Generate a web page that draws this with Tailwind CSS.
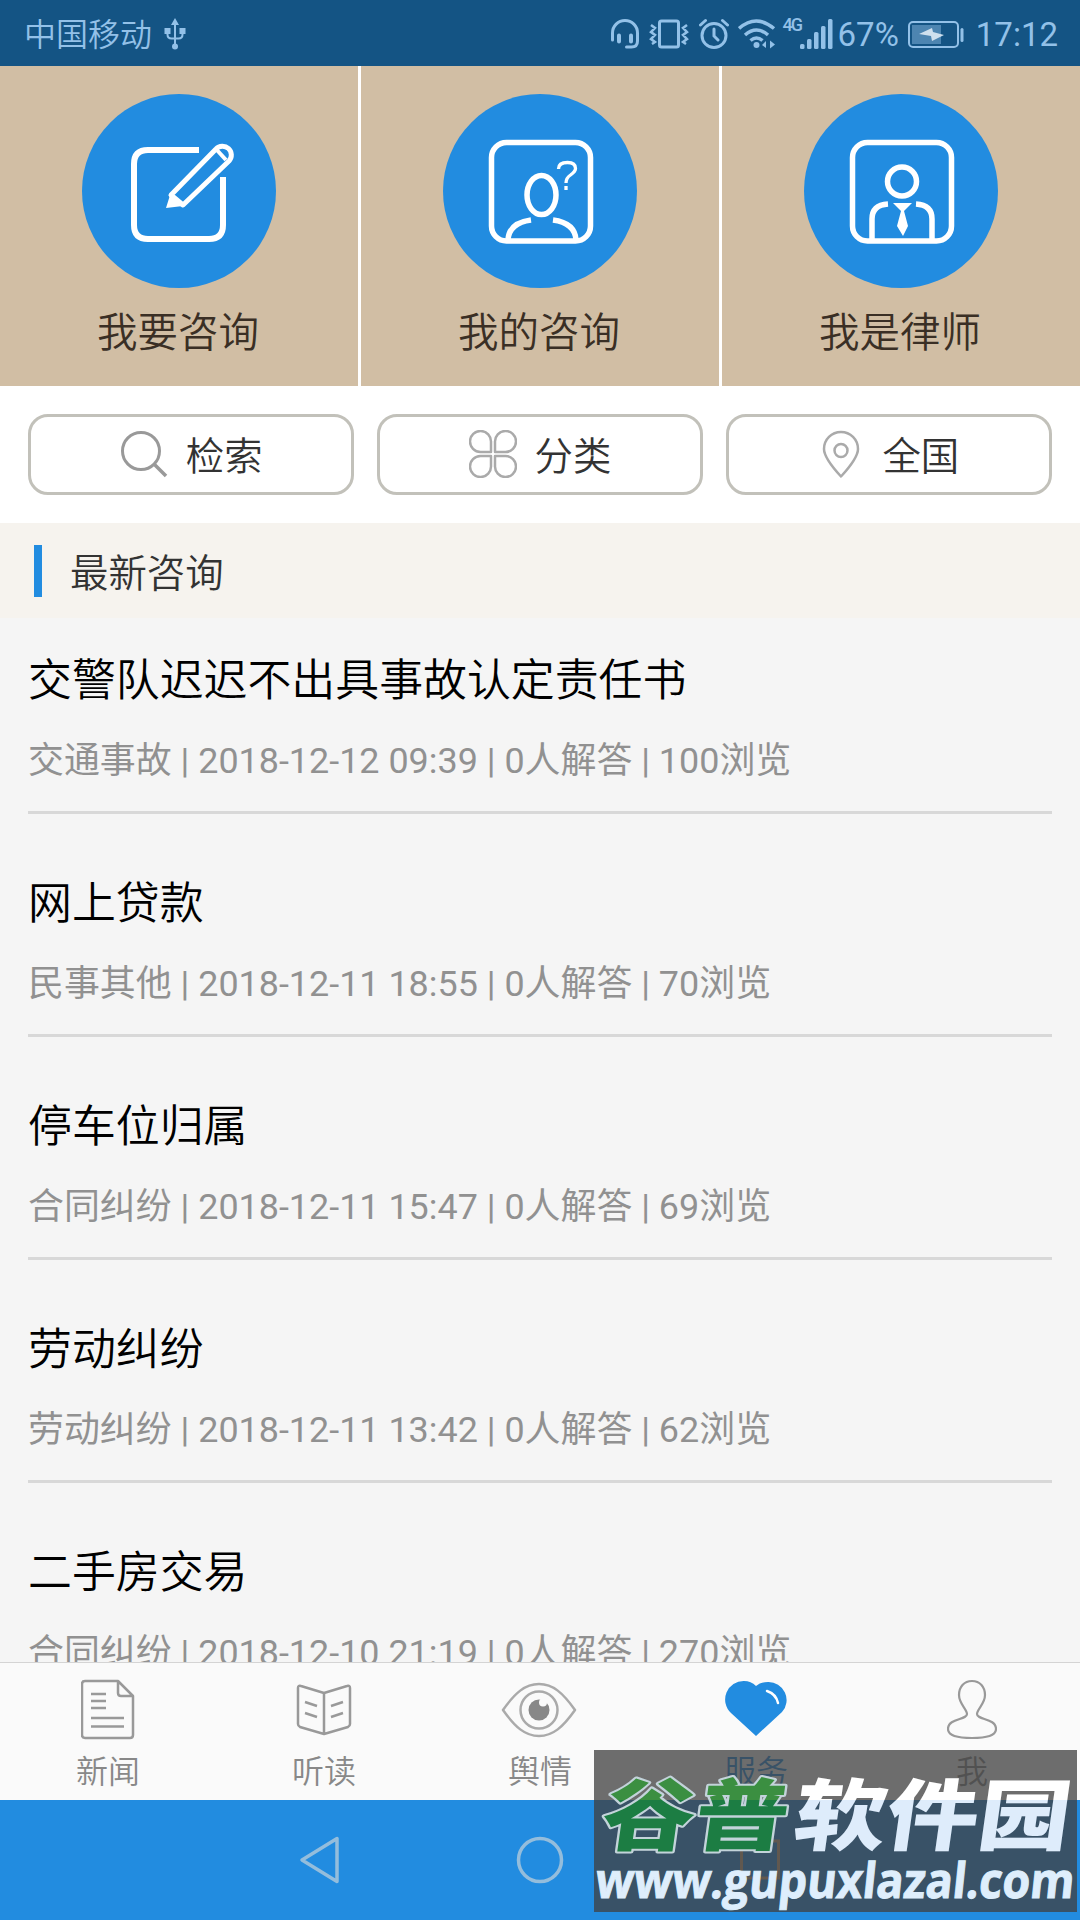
<!DOCTYPE html>
<html lang="zh-CN">
<head>
  <meta charset="UTF-8">
  <meta name="viewport" content="width=device-width, initial-scale=1.0">
  <title>法律咨询</title>
  <script src="https://cdn.jsdelivr.net/npm/@tailwindcss/browser@4"></script>
</head>
<body class="bg-[#f5f5f5] font-['Roboto','Noto_Sans_CJK_SC',sans-serif]">
  <div class="relative w-[1080px] h-[1920px] flex flex-col overflow-hidden">

    <!-- status bar -->
    <header class="h-[66px] shrink-0 bg-[#145484] text-[#93c1e8] flex items-center justify-between pt-0.5 pl-6 pr-[22px]">
      <div class="flex items-center gap-3">
        <span class="text-[32px] leading-none font-[350] pt-0.5">中国移动</span>
        <svg class="w-[22px] h-8" viewBox="0 0 22 32" fill="none" stroke="currentColor" stroke-width="2">
          <path d="M11 6v22M3.5 13v3.500q0 4 4 4h7q4 0 4-4V13" />
          <path d="M11 0l4 7H7zM0.500 10h6v6h-6zM15.500 10h6v6h-6z" fill="currentColor" stroke="none" />
          <circle cx="11" cy="28.500" r="3" fill="currentColor" stroke="none" />
        </svg>
      </div>
      <div class="flex items-center">
        <svg class="w-[30px] h-8" viewBox="0 0 30 32" fill="none" stroke="currentColor" stroke-width="3" stroke-linecap="round">
          <path d="M2.500 22v-7a12.500 12.500 0 0 1 25 0v8q0 6-6 6h-5" />
          <path d="M9 17.500v6M21 17.500v6" stroke-width="4" />
        </svg>
        <svg class="w-[40px] h-8 ml-[9px]" viewBox="0 0 40 32" fill="none" stroke="currentColor" stroke-width="3">
          <rect x="10.500" y="3" width="19" height="26" rx="2" />
          <path d="M2 7l4 3-4 4 4 3-4 4 4 3-3 2M38 7l-4 3 4 4-4 3 4 4-4 3 3 2" stroke-width="2.500" />
        </svg>
        <svg class="w-[30px] h-8 ml-[10px]" viewBox="0 0 30 32" fill="none" stroke="currentColor" stroke-width="3" stroke-linecap="round">
          <circle cx="15" cy="17.500" r="12" />
          <path d="M15 11v7l4 4M1.500 7l5-4.500M28.500 7l-5-4.500" />
        </svg>
        <svg class="w-[38px] h-8 ml-[9px]" viewBox="0 0 38 32" fill="none" stroke="currentColor" stroke-width="3.500">
          <path d="M1 10.500q17-15 35 0M7 17q11.500-10 23 0M12.500 22.500q6-5 12 0" />
          <circle cx="18.500" cy="27" r="3" fill="currentColor" stroke="none" />
          <path d="M24 27l4-4v7zM32 22.500v8l5-4z" fill="currentColor" stroke="none" />
        </svg>
        <span class="self-start -mt-0.5 ml-[7px] w-[17px] text-[18px] leading-none font-medium tracking-[-2px]">4G</span>
        <svg class="w-[33px] h-8" viewBox="0 0 33 32" fill="currentColor">
          <rect x="0" y="26" width="4.500" height="5" rx="1.500" />
          <rect x="7" y="21" width="4.500" height="10" rx="1.500" />
          <rect x="14" y="14" width="4.500" height="17" rx="1.500" />
          <rect x="21" y="8" width="4.500" height="23" rx="1.500" />
          <rect x="28" y="1" width="4.500" height="30" rx="1.500" />
        </svg>
        <span class="text-[33px] leading-none ml-[5px]">67%</span>
        <svg class="w-[56px] h-[27px] ml-[9px]" viewBox="0 0 56 27" fill="none" stroke="currentColor" stroke-width="2">
          <rect x="1" y="1" width="49" height="25" rx="4" />
          <rect x="4" y="4" width="29" height="19" fill="currentColor" fill-opacity=".45" stroke="none" />
          <path d="M11 13l13-6 1 4 11 3-12 6-1-5z" fill="#cfe0ee" stroke="none" />
          <rect x="52.500" y="7" width="3" height="14" rx="1.500" fill="currentColor" stroke="none" />
        </svg>
        <span class="text-[33px] leading-none ml-3">17:12</span>
      </div>
    </header>

    <!-- main entries -->
    <section class="h-[320px] shrink-0 grid grid-cols-3 gap-[3px] bg-white text-[#3a2f25] text-[40.5px] font-[350]">
      <a class="bg-[#d1bea4] flex flex-col items-center pt-7">
        <svg class="w-[194px] h-[194px]" viewBox="0 0 194 194" fill="none" stroke="#fff" stroke-width="6">
          <circle cx="97" cy="97" r="97" fill="#228ce0" stroke="none" />
          <path d="M117 56H66q-14 0-14 14v61q0 14 14 14h61q14 0 14-14V83" />
          <path d="M89 101l45-46a7.500 7.500 0 0 1 13 12L101 111z" stroke-width="5" stroke-linejoin="round" />
          <path d="M134 55l10 11" stroke-width="4" />
          <path d="M89 98l-5 16 17-2z" fill="#fff" stroke="none" />
        </svg>
        <span class="mt-[15px] -ml-0.5 leading-[60px]">我要咨询</span>
      </a>
      <a class="bg-[#d1bea4] flex flex-col items-center pt-7">
        <svg class="w-[194px] h-[194px]" viewBox="0 0 194 194" fill="none" stroke="#fff" stroke-width="5.500">
          <circle cx="97" cy="97" r="97" fill="#228ce0" stroke="none" />
          <rect x="48.500" y="48.500" width="99" height="98.500" rx="15" />
          <ellipse cx="98.500" cy="101" rx="14.500" ry="19.500" />
          <path d="M65 146q1-17 23-20M133 146q-1-17-23-20" />
          <path d="M115.500 75q0-6.500 9-6.500 8 0 8 6 0 3-5 6.500-4.500 3-4.500 8M123 92v4" stroke-width="3.300" />
        </svg>
        <span class="mt-[15px] -ml-0.5 leading-[60px]">我的咨询</span>
      </a>
      <a class="bg-[#d1bea4] flex flex-col items-center pt-7">
        <svg class="w-[194px] h-[194px]" viewBox="0 0 194 194" fill="none" stroke="#fff" stroke-width="5.500">
          <circle cx="97" cy="97" r="97" fill="#228ce0" stroke="none" />
          <rect x="48.500" y="48.500" width="99" height="98.500" rx="15" />
          <circle cx="98" cy="87.500" r="14.500" />
          <path d="M68 146v-21q0-14 16-15M128 146v-21q0-14-16-15" />
          <path d="M89 109h19l-8 8 4 15-5 10-6-10 4-15z" fill="#fff" stroke="none" />
        </svg>
        <span class="mt-[15px] -ml-0.5 leading-[60px]">我是律师</span>
      </a>
    </section>

    <!-- filters -->
    <section class="h-[137px] shrink-0 bg-white pt-7 px-7 grid grid-cols-3 content-start gap-[22.500px] text-[38.400px] text-[#333] font-[350]">
      <button class="h-[81px] border-3 border-[#c2c1ba] rounded-[20px] flex items-center justify-center">
        <svg class="w-[48px] h-[48px] -mt-0.5" viewBox="0 0 48 48" fill="none" stroke="#999" stroke-width="3">
          <circle cx="21" cy="21" r="18.500" />
          <path d="M34 34l12 12" stroke-width="3.500" />
        </svg>
        <span class="ml-[18px] leading-[60px] pt-[5px]">检索</span>
      </button>
      <button class="h-[81px] border-3 border-[#c2c1ba] rounded-[20px] flex items-center justify-center">
        <svg class="w-[48px] h-[48px] -mt-0.5" viewBox="0 0 48 48" fill="none" stroke="#aaa" stroke-width="2.500">
          <path d="M22 22V12a10.500 10.500 0 1 0-10.500 10zM26 22V12a10.500 10.500 0 1 1 10.500 10zM22 26v10a10.500 10.500 0 1 1-10.500-10zM26 26v10a10.500 10.500 0 1 0 10.500-10z" stroke-linejoin="round" />
        </svg>
        <span class="ml-[18px] leading-[60px] pt-[5px]">分类</span>
      </button>
      <button class="h-[81px] border-3 border-[#c2c1ba] rounded-[20px] flex items-center justify-center pl-1">
        <svg class="w-[38px] h-[48px] -mt-0.5" viewBox="0 0 38 48" fill="none" stroke="#aaa" stroke-width="2.500" stroke-linejoin="round">
          <path d="M19 46.500Q2 28 2 19a17 17 0 0 1 34 0q0 9-17 27.500z" />
          <circle cx="19" cy="20.500" r="6.500" />
        </svg>
        <span class="ml-[22px] leading-[60px] pt-[5px]">全国</span>
      </button>
    </section>

    <h2 class="h-[95px] shrink-0 bg-[#f6f3ee] flex items-center pl-[34px] text-[38.400px] text-[#333] font-[350]">
      <i class="w-2 h-[52px] bg-[#228ce0]"></i>
      <span class="ml-7 leading-[60px] pt-1.5">最新咨询</span>
    </h2>

    <!-- question list, filled below -->
    <ul id="questionList" class="flex-1 min-h-0 overflow-hidden px-7"></ul>

    <!-- tab bar -->
    <nav class="h-[138px] shrink-0 bg-[#fafafa] border-t border-[#d4d4d4] grid grid-cols-5 text-[32px] text-[#888]">
      <a class="flex flex-col items-center pt-4">
        <svg class="w-[54px] h-[62px]" viewBox="0 0 54 62" fill="none" stroke="#999" stroke-width="2.500" stroke-linejoin="round">
          <path d="M4 2h33l15 15v39q0 3-3 3H4q-3 0-3-3V5q0-3 3-3zM37 2v12q0 3 3 3h12" />
          <path d="M10 15h15M10 22h15M10 29h15M10 39h33M10 47.500h33" />
        </svg>
        <span class="mt-[5px] leading-[52px] font-[350]">新闻</span>
      </a>
      <a class="flex flex-col items-center pt-4">
        <svg class="w-[56px] h-[62px]" viewBox="0 0 56 62" fill="none" stroke="#999" stroke-width="2.500" stroke-linejoin="round">
          <path d="M28 14L5 7q-3-1-3 2v36q0 2 2 3l24 7 24-7q2-1 2-3V9q0-3-3-2zv41" />
          <path d="M9 23l12 4M9 34l12 4M47 23l-12 4M47 34l-12 4" />
        </svg>
        <span class="mt-[5px] leading-[52px] font-[350]">听读</span>
      </a>
      <a class="flex flex-col items-center pt-4">
        <svg class="w-[76px] h-[62px] -ml-0.5" viewBox="0 0 76 62" fill="none" stroke="#aaa" stroke-width="2.500">
          <path d="M2 31C14 14 24 5 38 5s24 9 36 26C62 48 52 57 38 57S14 48 2 31z" stroke-linejoin="round" />
          <circle cx="38" cy="31" r="18.500" />
          <circle cx="38" cy="31" r="10.500" fill="#888" stroke="none" />
          <circle cx="42" cy="23.500" r="4" fill="#fafafa" stroke="none" />
        </svg>
        <span class="mt-[5px] leading-[52px] font-[350]">舆情</span>
      </a>
      <a class="flex flex-col items-center pt-4 text-[#228ce0]">
        <svg class="w-[62px] h-[62px]" viewBox="0 0 62 62" fill="none">
          <path d="M31 57L6 34A18.500 18.500 0 0 1 19 2q7 0 12 5 5-4 12-4a18 18 0 0 1 14 30z" fill="currentColor" />
          <path d="M42 12q9 3 11 12" stroke="#fff" stroke-width="2.500" stroke-linecap="round" />
        </svg>
        <span class="mt-[5px] leading-[52px] font-[350]">服务</span>
      </a>
      <a class="flex flex-col items-center pt-4">
        <svg class="w-[50px] h-[62px]" viewBox="0 0 50 62" fill="none" stroke="#999" stroke-width="2.200">
          <path d="M25 2c-8 0-13 6-13 14 0 9 8 14 8 19 0 6-19 4-19 15 0 7 12 9 24 9s24-2 24-9c0-11-19-9-19-15 0-5 8-10 8-19 0-8-5-14-13-14z" />
        </svg>
        <span class="mt-[5px] leading-[52px] font-[350]">我</span>
      </a>
    </nav>

    <!-- system navigation -->
    <footer class="h-[120px] shrink-0 bg-[#228ce0] flex items-center justify-center gap-[172px]">
      <svg class="w-[48px] h-[48px]" viewBox="0 0 48 48" fill="none" stroke="#94bddc" stroke-width="3.500" stroke-linejoin="round">
        <path d="M41 2.500v43L6 24z" />
      </svg>
      <svg class="w-[48px] h-[48px]" viewBox="0 0 48 48" fill="none" stroke="#94bddc" stroke-width="3.500">
        <circle cx="24" cy="24" r="21.500" />
      </svg>
      <svg class="w-[48px] h-[48px]" viewBox="0 0 48 48" fill="none" stroke="#c9a27e" stroke-width="3">
        <rect x="5.500" y="5" width="37" height="37" />
      </svg>
    </footer>

    <!-- site badge over the bottom right corner -->
    <svg class="absolute left-[594px] top-[1750px] w-[483px] h-[162px] bg-[#414141]/76" viewBox="0 0 483 162">
      <defs>
        <linearGradient id="green" gradientUnits="userSpaceOnUse" x1="0" y1="-76" x2="0" y2="6">
          <stop offset=".39" stop-color="#3b8f41" />
          <stop offset=".39" stop-color="#1c7d43" />
        </linearGradient>
        <linearGradient id="white" gradientUnits="userSpaceOnUse" x1="0" y1="-76" x2="0" y2="6">
          <stop offset=".39" stop-color="#fff" />
          <stop offset=".39" stop-color="#deecfb" />
        </linearGradient>
      </defs>
      <g class="font-['Noto_Sans_CJK_SC',sans-serif] font-black" font-size="78" transform="translate(0 94) skewX(-8)">
        <text x="5" y="0" textLength="186" lengthAdjust="spacingAndGlyphs" fill="url(#green)" stroke="#c3d3da" stroke-width="4" stroke-linejoin="round" paint-order="stroke">谷普</text>
        <text x="197" y="0" textLength="276" lengthAdjust="spacingAndGlyphs" fill="url(#white)">软件园</text>
      </g>
      <g class="font-['Open_Sans','Noto_Sans',sans-serif] font-bold" font-size="49" transform="translate(0 148) skewX(-6)">
        <text x="0" y="0" textLength="479" lengthAdjust="spacingAndGlyphs" fill="#deeefc" stroke="#deeefc" stroke-width="1">www.gupuxlazal.com</text>
      </g>
    </svg>
  </div>

<script>
  const questions = [
    { title: "交警队迟迟不出具事故认定责任书", type: "交通事故", time: "2018-12-12 09:39", answers: 0, views: 100 },
    { title: "网上贷款", type: "民事其他", time: "2018-12-11 18:55", answers: 0, views: 70 },
    { title: "停车位归属", type: "合同纠纷", time: "2018-12-11 15:47", answers: 0, views: 69 },
    { title: "劳动纠纷", type: "劳动纠纷", time: "2018-12-11 13:42", answers: 0, views: 62 },
    { title: "二手房交易", type: "合同纠纷", time: "2018-12-10 21:19", answers: 0, views: 270 }
  ];

  const list = document.getElementById("questionList");
  questions.forEach(q => {
    list.innerHTML += `
      <li class="h-[196px] mb-[27px] border-b-3 border-[#d8d8d8] pt-[31px]">
        <h3 class="text-[43.900px] leading-[64px] text-black font-[350] whitespace-nowrap">${q.title}</h3>
        <p class="mt-[15px] text-[35.920px] leading-[66px] text-[#919191] whitespace-nowrap">${q.type} | ${q.time} | ${q.answers}人解答 | ${q.views}浏览</p>
      </li>`;
  });
</script>
</body>
</html>
